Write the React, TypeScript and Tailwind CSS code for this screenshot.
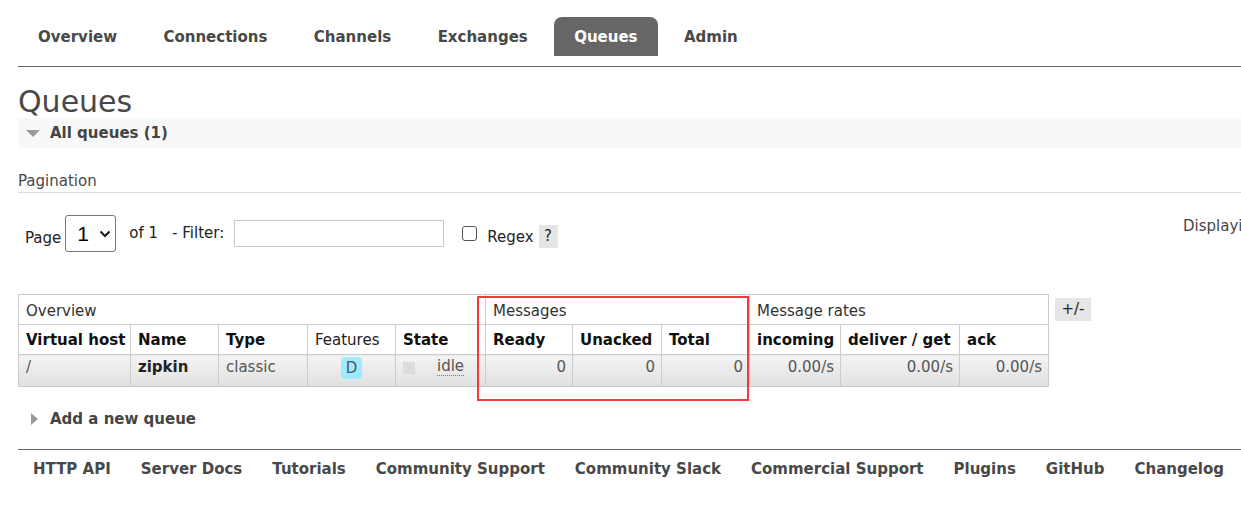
import React from "react";

const navTabs = ["Overview", "Connections", "Channels", "Exchanges", "Queues", "Admin"];
const footerLinks = [
  "HTTP API",
  "Server Docs",
  "Tutorials",
  "Community Support",
  "Community Slack",
  "Commercial Support",
  "Plugins",
  "GitHub",
  "Changelog",
];

export default function App() {
  return (
    <div className="w-[1241px] h-[514px] overflow-hidden bg-white text-[#484848] font-['DejaVu_Sans',Verdana,sans-serif] text-[15px]">
      <div className="pl-[18px]">
        {/* Nav */}
        <div className="h-[67px] border-b border-[#666] pt-[17px] flex gap-[6.4px]">
          {navTabs.map((t) => (
            <div
              key={t}
              className={
                t === "Queues"
                  ? "h-[39px] px-[20px] pt-[1px] flex items-center font-bold text-white bg-[#666] rounded-t-[8px]"
                  : "h-[39px] px-[20px] pt-[1px] flex items-center font-bold text-[#484848]"
              }
            >
              {t}
            </div>
          ))}
        </div>

        {/* Title */}
        <h1 className="mt-[19px] h-[30px] text-[30px] leading-[31px] font-normal text-[#484848]">Queues</h1>

        {/* All queues bar */}
        <div className="mt-[2px] h-[30px] bg-[#f8f8f8] flex items-center">
          <svg width="14" height="7" viewBox="0 0 14 7" className="ml-[8px]">
            <polygon points="0,0 14,0 7,7" fill="#999" />
          </svg>
          <span className="ml-[10px] pt-[1px] font-bold text-[#444]">All queues (1)</span>
        </div>

        {/* Pagination */}
        <div className="mt-[22px] h-[23px] leading-[22px] border-b border-[#ddd] text-[#484848]">Pagination</div>

        {/* Page row */}
        <div className="mt-[22px] h-[37px] flex items-start pl-[7px] text-[#222]">
          <span className="mt-[14px] leading-[18px]">Page</span>
          <div className="ml-[4px] w-[51px] h-[37px] border border-[#767676] rounded-[3px] flex items-center pl-[11px] bg-white">
            <span className="font-['Liberation_Sans',Arial,sans-serif] text-[21px] leading-[21px] text-black">1</span>
            <svg width="12" height="8" viewBox="0 0 12 8" className="ml-[10px] mt-[1px]">
              <polyline points="1.5,1.5 6,6 10.5,1.5" fill="none" stroke="#111" strokeWidth="2" />
            </svg>
          </div>
          <span className="ml-[13px] mt-[9px] leading-[18px]">of 1</span>
          <span className="ml-[14px] mt-[9px] leading-[18px]">- Filter:</span>
          <div className="ml-[10px] mt-[5px] w-[210px] h-[27px] border border-[#c8c8c8] bg-white" />
          <div className="ml-[18px] mt-[11px] w-[15px] h-[15px] border border-[#555] rounded-[3px] bg-white" />
          <span className="ml-[10px] mt-[13px] leading-[18px]">Regex</span>
          <div className="ml-[5px] mt-[10px] w-[19px] h-[23px] bg-[#e5e5e5] flex items-center justify-center">?</div>
          <div className="flex-1" />
          <div className="w-[58px] shrink-0 overflow-hidden whitespace-nowrap mt-[2px] leading-[18px] text-[#484848]">
            Displaying 1 item , page size up to: 100
          </div>
        </div>

        {/* Table */}
        <div className="mt-[42px] flex items-start">
          <div className="relative">
            <table className="table-fixed border-collapse w-[1031px]">
              <colgroup>
                <col className="w-[112px]" />
                <col className="w-[88px]" />
                <col className="w-[89px]" />
                <col className="w-[88px]" />
                <col className="w-[90px]" />
                <col className="w-[87px]" />
                <col className="w-[89px]" />
                <col className="w-[88px]" />
                <col className="w-[91px]" />
                <col className="w-[119px]" />
                <col className="w-[89px]" />
              </colgroup>
              <thead>
                <tr className="h-[30px]">
                  <th colSpan={5} className="border border-[#ccc] px-[7px] pt-[3px] text-left font-normal text-[#333]">Overview</th>
                  <th colSpan={3} className="border border-[#ccc] px-[7px] pt-[3px] text-left font-normal text-[#333]">Messages</th>
                  <th colSpan={3} className="border border-[#ccc] px-[7px] pt-[3px] text-left font-normal text-[#333]">Message rates</th>
                </tr>
                <tr className="h-[30px] text-[#111]">
                  <th className="border border-[#ccc] px-[7px] pt-[2px] text-left font-bold whitespace-nowrap">Virtual host</th>
                  <th className="border border-[#ccc] px-[7px] pt-[2px] text-left font-bold">Name</th>
                  <th className="border border-[#ccc] px-[7px] pt-[2px] text-left font-bold">Type</th>
                  <th className="border border-[#ccc] px-[7px] pt-[2px] text-left font-normal text-[#222]">Features</th>
                  <th className="border border-[#ccc] px-[7px] pt-[2px] text-left font-bold">State</th>
                  <th className="border border-[#ccc] px-[7px] pt-[2px] text-left font-bold">Ready</th>
                  <th className="border border-[#ccc] px-[7px] pt-[2px] text-left font-bold">Unacked</th>
                  <th className="border border-[#ccc] px-[7px] pt-[2px] text-left font-bold">Total</th>
                  <th className="border border-[#ccc] px-[7px] pt-[2px] text-left font-bold">incoming</th>
                  <th className="border border-[#ccc] px-[7px] pt-[2px] text-left font-bold whitespace-nowrap">deliver / get</th>
                  <th className="border border-[#ccc] px-[7px] pt-[2px] text-left font-bold">ack</th>
                </tr>
              </thead>
              <tbody>
                <tr className="h-[32px] text-[#555]">
                  <td className="border border-[#ccc] px-[7px] pt-[3px] align-top leading-[18px] bg-linear-to-b from-[#f4f4f4] to-[#e0e0e0]">/</td>
                  <td className="border border-[#ccc] px-[7px] pt-[3px] align-top leading-[18px] bg-linear-to-b from-[#f4f4f4] to-[#e0e0e0] font-bold text-[#222]">zipkin</td>
                  <td className="border border-[#ccc] px-[7px] pt-[3px] align-top leading-[18px] bg-linear-to-b from-[#f4f4f4] to-[#e0e0e0]">classic</td>
                  <td className="border border-[#ccc] px-[7px] pt-[2px] align-top leading-[18px] bg-linear-to-b from-[#f4f4f4] to-[#e0e0e0] text-center">
                    <span className="inline-flex w-[21px] h-[22px] items-center justify-center rounded-[4px] bg-[#9eeaff] text-[#555]">D</span>
                  </td>
                  <td className="border border-[#ccc] px-[7px] pt-[3px] align-top leading-[18px] bg-linear-to-b from-[#f4f4f4] to-[#e0e0e0]">
                    <div className="flex items-start">
                      <span className="mt-[4px] w-[12px] h-[12px] bg-[#dcdcdc]" />
                      <span className="ml-[22px] border-b border-dotted border-[#777] leading-[17px]">idle</span>
                    </div>
                  </td>
                  <td className="border border-[#ccc] pl-[7px] pr-[6px] pt-[3px] align-top leading-[18px] bg-linear-to-b from-[#f4f4f4] to-[#e0e0e0] text-right">0</td>
                  <td className="border border-[#ccc] pl-[7px] pr-[6px] pt-[3px] align-top leading-[18px] bg-linear-to-b from-[#f4f4f4] to-[#e0e0e0] text-right">0</td>
                  <td className="border border-[#ccc] pl-[7px] pr-[6px] pt-[3px] align-top leading-[18px] bg-linear-to-b from-[#f4f4f4] to-[#e0e0e0] text-right">0</td>
                  <td className="border border-[#ccc] pl-[7px] pr-[6px] pt-[3px] align-top leading-[18px] bg-linear-to-b from-[#f4f4f4] to-[#e0e0e0] text-right">0.00/s</td>
                  <td className="border border-[#ccc] pl-[7px] pr-[6px] pt-[3px] align-top leading-[18px] bg-linear-to-b from-[#f4f4f4] to-[#e0e0e0] text-right">0.00/s</td>
                  <td className="border border-[#ccc] pl-[7px] pr-[6px] pt-[3px] align-top leading-[18px] bg-linear-to-b from-[#f4f4f4] to-[#e0e0e0] text-right">0.00/s</td>
                </tr>
              </tbody>
            </table>
            {/* red highlight annotation */}
            <div className="absolute left-[459px] top-[2px] w-[272px] h-[105px] border-2 border-[#f03c3c] pointer-events-none" />
          </div>
          <div className="ml-[6px] mt-[4px] w-[36px] h-[23px] bg-[#e5e5e5] flex items-center justify-center text-[#222]">+/-</div>
        </div>

        {/* Add a new queue */}
        <div className="mt-[17px] h-[30px] flex items-center">
          <svg width="7" height="12" viewBox="0 0 7 12" className="ml-[13px]">
            <polygon points="0,0 7,6 0,12" fill="#999" />
          </svg>
          <span className="ml-[12px] font-bold text-[#444]">Add a new queue</span>
        </div>

        {/* Footer */}
        <div className="mt-[15px] border-t border-[#666] pt-[10px] flex">
          {footerLinks.map((l) => (
            <span key={l} className="px-[15px] leading-[18px] font-bold text-[#484848] whitespace-nowrap">
              {l}
            </span>
          ))}
        </div>
      </div>
    </div>
  );
}
